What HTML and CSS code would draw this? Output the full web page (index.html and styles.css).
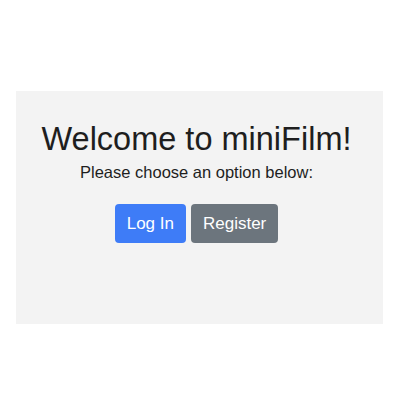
FILE: index.html
```html
<!DOCTYPE html>
<html>
<head>
<meta charset="utf-8">
<link rel="stylesheet" href="styles.css">
</head>
<body>
<div class="panel">
  <h1 class="title">Welcome to miniFilm!</h1>
  <p class="subtitle">Please choose an option below:</p>
  <div class="actions">
    <button class="btn btn-primary">Log In</button>
    <button class="btn btn-secondary">Register</button>
  </div>
</div>
</body>
</html>
```
FILE: styles.css
```css
html, body {
  margin: 0;
  padding: 0;
  background: #ffffff;
}
body {
  font-family: "Liberation Sans", Arial, sans-serif;
  padding: 91px 17px 0 16px;
}
.panel {
  box-sizing: border-box;
  width: 367px;
  height: 233px;
  background: #f3f3f3;
  padding: 28.5px 6px 0 0;
  display: flex;
  flex-direction: column;
  align-items: center;
}
.title {
  margin: 0;
  font-size: 32.5px;
  line-height: 38px;
  font-weight: 400;
  color: #1e1e1e;
}
.subtitle {
  margin: 4.5px 0 0;
  font-size: 16.5px;
  line-height: 20px;
  color: #1e1e1e;
}
.actions {
  margin-top: 22px;
  display: flex;
  gap: 5px;
}
.btn {
  font-family: "Liberation Sans", Arial, sans-serif;
  font-size: 17px;
  line-height: 20px;
  height: 39px;
  padding: 0 12px;
  border: none;
  border-radius: 4px;
  color: #ffffff;
  cursor: pointer;
}
.btn-primary {
  background: #3e7cf7;
}
.btn-secondary {
  background: #6c757d;
}
```
